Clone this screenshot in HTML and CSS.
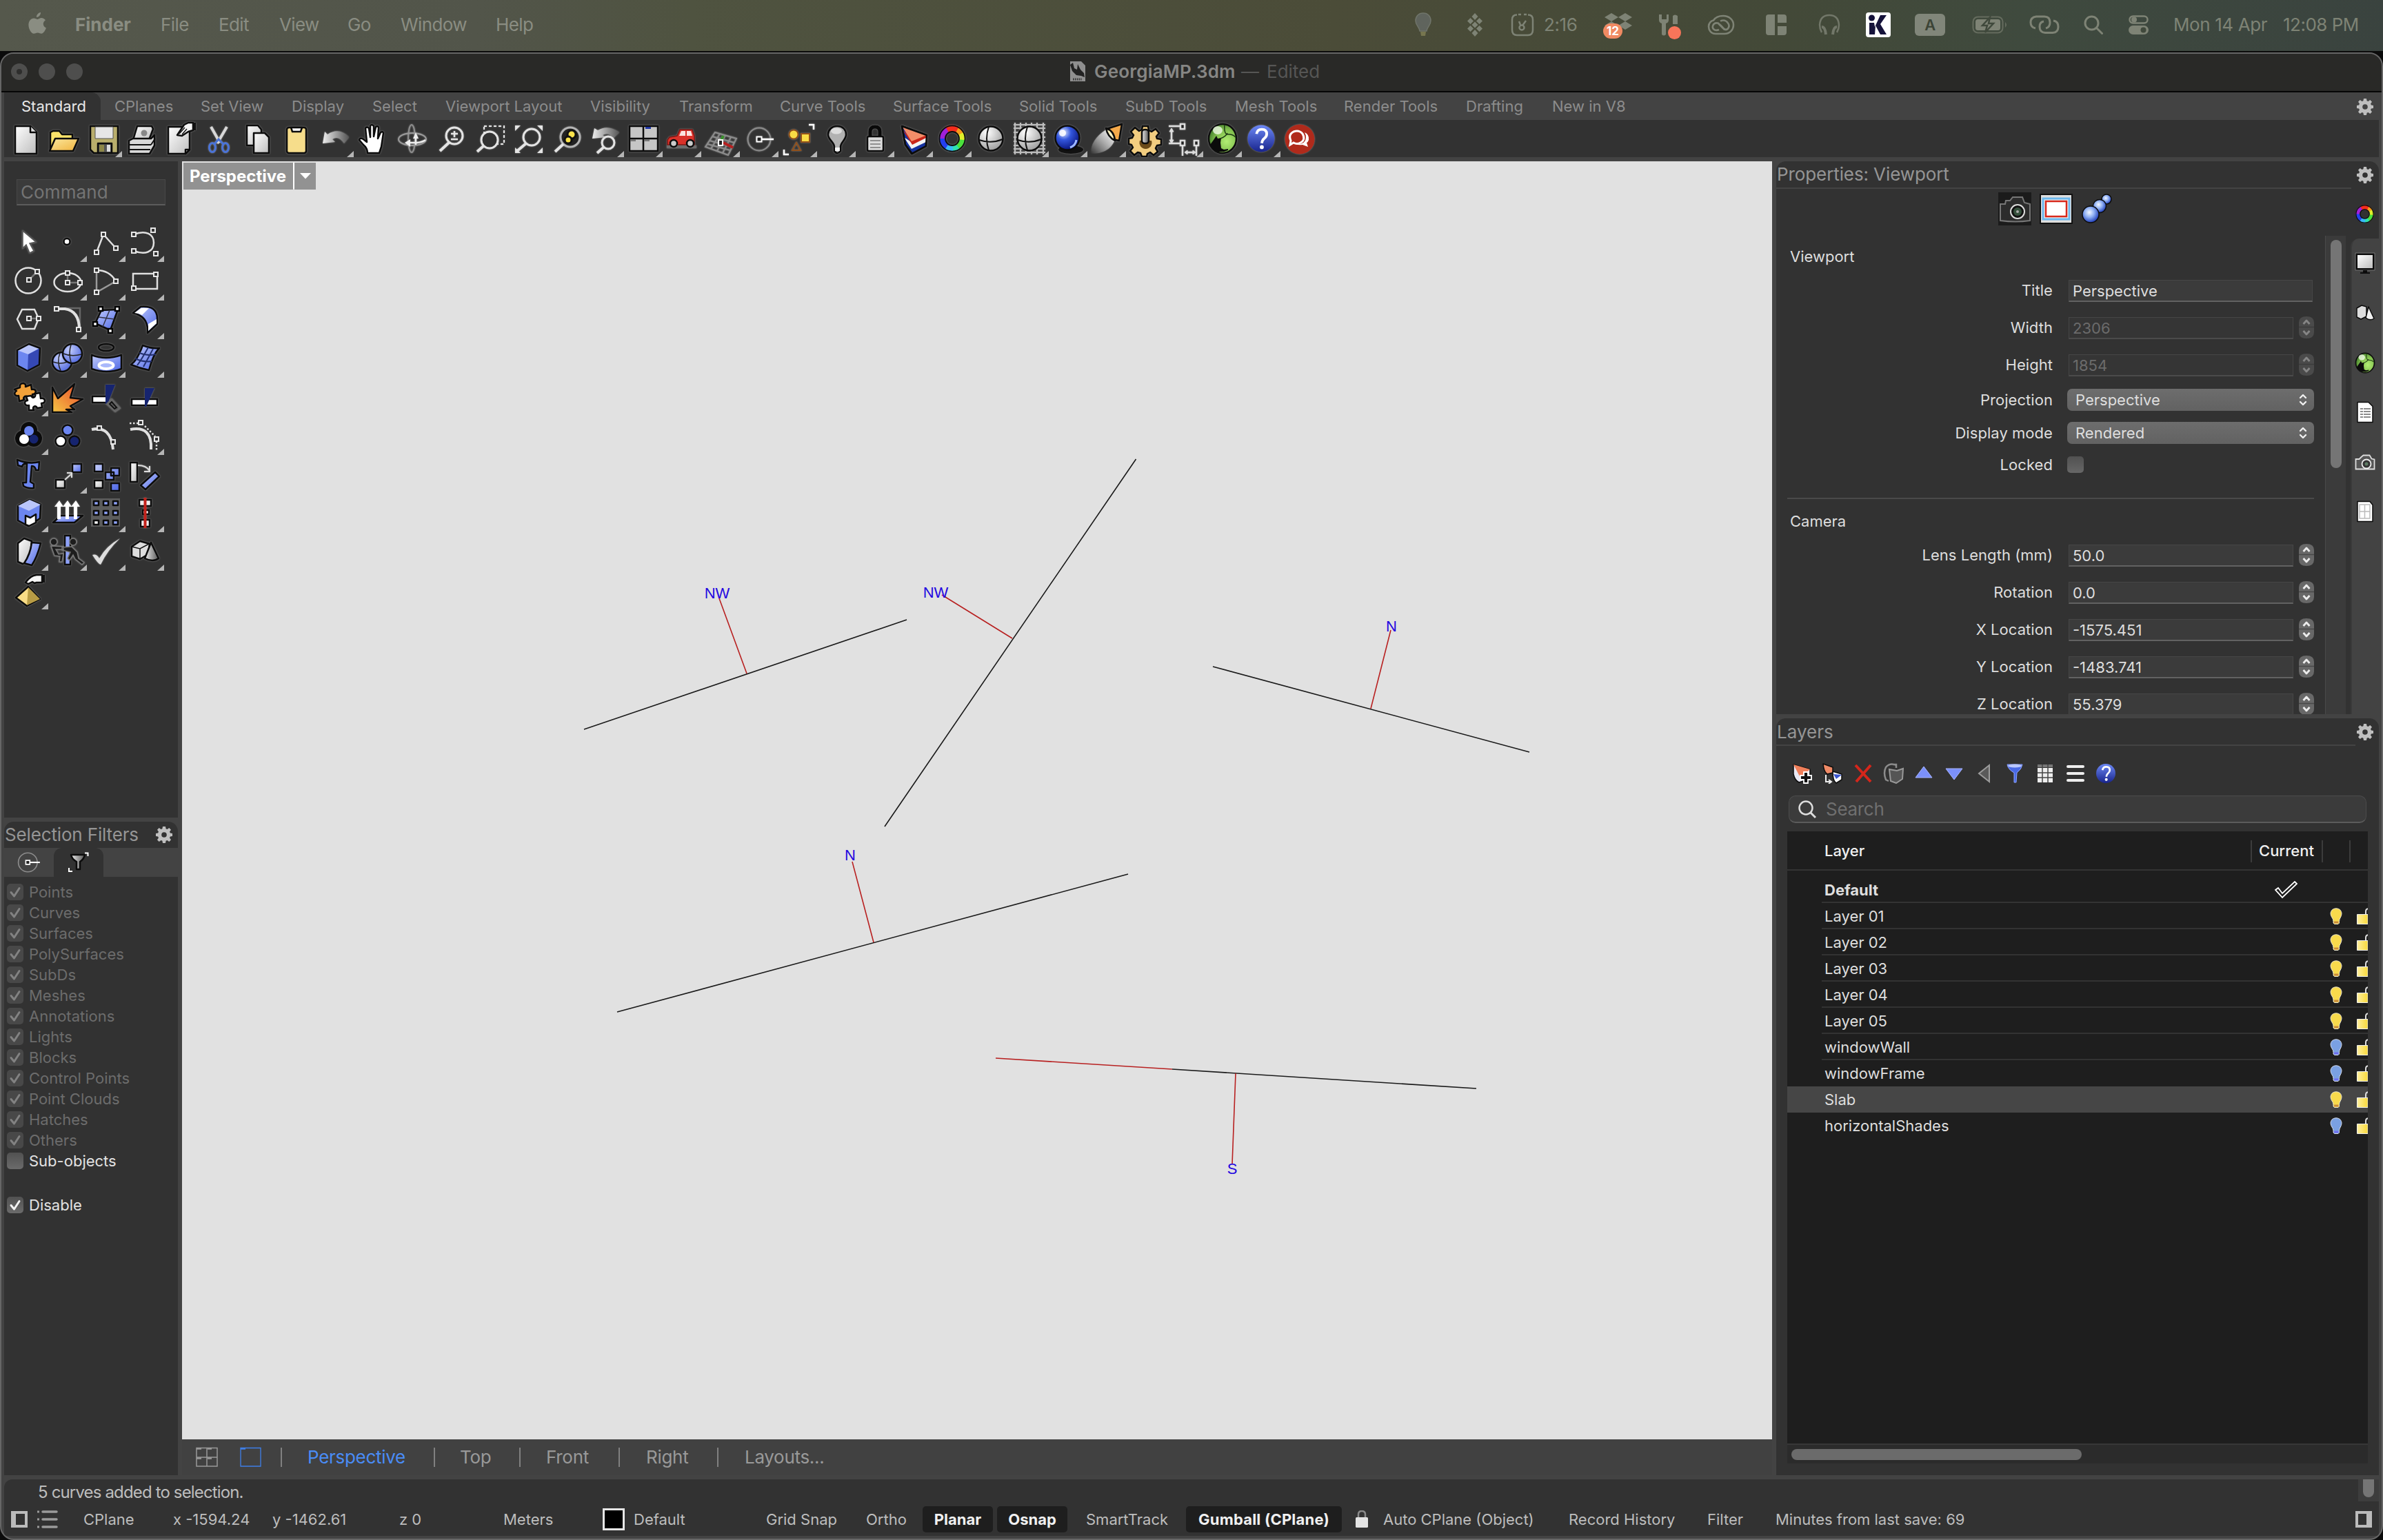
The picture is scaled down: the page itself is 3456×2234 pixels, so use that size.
FILE: index.html
```html
<!DOCTYPE html>
<html lang="en">
<head>
<meta charset="utf-8">
<title>GeorgiaMP.3dm</title>
<link rel="stylesheet" href="styles.css">
</head>
<body>
<svg class="defs" width="0" height="0">
<defs>
<linearGradient id="gBlue" x1="0" y1="0" x2="1" y2="1"><stop offset="0" stop-color="#c3cdfc"/><stop offset="1" stop-color="#4c66e6"/></linearGradient>
<linearGradient id="gGray" x1="0" y1="0" x2="1" y2="1"><stop offset="0" stop-color="#fff"/><stop offset="1" stop-color="#bdbdbd"/></linearGradient>
<linearGradient id="gDark" x1="0" y1="0" x2="1" y2="0"><stop offset="0" stop-color="#eee"/><stop offset="1" stop-color="#555"/></linearGradient>
<linearGradient id="gFire" x1="0" y1="1" x2="1" y2="0"><stop offset="0" stop-color="#f5c644"/><stop offset="1" stop-color="#e8432b"/></linearGradient>
<linearGradient id="gGold" x1="0" y1="0" x2="1" y2="1"><stop offset="0" stop-color="#fbe9a0"/><stop offset="1" stop-color="#f0b23c"/></linearGradient>
<linearGradient id="gHelp" x1="0" y1="0" x2="0" y2="1"><stop offset="0" stop-color="#6c88f5"/><stop offset="1" stop-color="#18248c"/></linearGradient>
<linearGradient id="gBeam" x1="1" y1="0" x2="0" y2="1"><stop offset="0" stop-color="#fff"/><stop offset="1" stop-color="#fff" stop-opacity="0"/></linearGradient>
<linearGradient id="gLock" x1="0" y1="0" x2="1" y2="0"><stop offset="0" stop-color="#fff0a0"/><stop offset="1" stop-color="#f8d93a"/></linearGradient>
<radialGradient id="gBall" cx=".35" cy=".25" r=".8"><stop offset="0" stop-color="#fff"/><stop offset="1" stop-color="#9a9a9a"/></radialGradient>
<radialGradient id="gBallB" cx=".35" cy=".28" r=".75"><stop offset="0" stop-color="#dfeaff"/><stop offset=".4" stop-color="#3457dd"/><stop offset="1" stop-color="#07127a"/></radialGradient>
<radialGradient id="gBallS" cx=".42" cy=".38" r=".65"><stop offset="0" stop-color="#f4f8ff"/><stop offset=".45" stop-color="#8fb0f4"/><stop offset="1" stop-color="#1433b4"/></radialGradient>
<radialGradient id="gBallG" cx=".65" cy=".6" r=".7"><stop offset="0" stop-color="#b2ee74"/><stop offset=".6" stop-color="#7fbd4c"/><stop offset="1" stop-color="#3f7a2a"/></radialGradient>
<radialGradient id="gBallL" cx=".35" cy=".3" r=".8"><stop offset="0" stop-color="#c5cffd"/><stop offset="1" stop-color="#4a62dc"/></radialGradient>
</defs>
<symbol id="gear" viewBox="0 0 24 24"><path fill="#bfbfbf" fill-rule="evenodd" d="M10 0h4l.6 3.3 1.900.8L19.300 2.100l2.700 2.700-2 2.700.9 2 3.100.5v4l-3.100.6-.9 1.900 2 2.700-2.700 2.700-2.800-1.900-1.900.8L14 24h-4l-.6-3.200-1.900-.8-2.800 1.900L2 19.200l2-2.700-.9-1.900L0 14v-4l3.100-.5.9-2-2-2.700L4.700 2.100l2.800 2 1.900-.8zM12 8.200a3.800 3.800 0 100 7.600 3.800 3.800 0 000-7.600z"/></symbol>
<symbol id="node" viewBox="0 0 8 8"><path d="M1 1h6v6H1z" fill="#323232" stroke="#e6e6e6" stroke-width="2"/></symbol>
<symbol id="wheel" viewBox="0 0 44 44"><g fill="none" stroke-width="10"><path stroke="#f52c1c" d="M13 8.400A16 16 0 0131 8.400"/><path stroke="#f79a1c" d="M30 8A16 16 0 0136.500 15"/><path stroke="#dff02a" d="M36 14A16 16 0 0137.500 26"/><path stroke="#4be03c" d="M38 24A16 16 0 0130 36"/><path stroke="#2fe0b0" d="M31 35A16 16 0 0121 38"/><path stroke="#39b9f5" d="M23 38A16 16 0 0112 34.500"/><path stroke="#2440f0" d="M13 35.500A16 16 0 016 20"/><path stroke="#a020d8" d="M6 22A16 16 0 0114 8"/></g><g fill="none" stroke="#0c0c0c" stroke-width="2"><circle cx="22" cy="22" r="20.500"/><circle cx="22" cy="22" r="11"/></g></symbol>
<symbol id="help" viewBox="0 0 44 44"><circle cx="22" cy="22" r="20.500" fill="url(#gHelp)"/><path d="M15 15q1-7 8-7 7.500 0 7.500 7 0 4-4 7-3 2.500-3.500 7" fill="none" stroke="#fff" stroke-width="4"/><circle cx="23" cy="35" r="3" fill="#fff"/></symbol>
<symbol id="rhino" viewBox="0 0 44 46"><ellipse cx="22" cy="23" rx="20" ry="21" fill="url(#gBallG)" stroke="#0d0d0d" stroke-width="2.500"/><path d="M4 32l5-7 4-6 2 4 5-1-1 7 1 8 4 2 6-1v2l-6 2h-9Q7 39 4 32z" fill="#0b0b0b"/><path d="M25 3q-1 11 3 14 8-1 13 4M19 23q8-3 10-8" fill="none" stroke="#1c3a14" stroke-width="1.500"/><ellipse cx="15" cy="11" rx="7" ry="6" fill="#f0fbe6" opacity=".8"/></symbol>
<symbol id="check" viewBox="0 0 24 24"><path d="M6 12.500l4.500 5.500L18 6.500" fill="none" stroke="currentColor" stroke-width="3" stroke-linecap="round" stroke-linejoin="round"/></symbol>
<symbol id="bulbY" viewBox="0 0 18 24"><path d="M9 .8c5 0 8 3.500 8 7.700 0 4.500-3.500 6.500-3.500 11V22l-1.500 1.500H6.500L5 22v-2.500C5 15 1 13 1 8.500 1 4.300 4 .8 9 .8z" fill="#f8da4c" stroke="#e8e4d0" stroke-width="1"/><path d="M6 19.500h6.500v3H6z" fill="#c88a3a"/></symbol>
<symbol id="bulbB" viewBox="0 0 18 24"><path d="M9 .8c5 0 8 3.500 8 7.700 0 4.500-3.500 6.500-3.500 11V22l-1.500 1.500H6.500L5 22v-2.500C5 15 1 13 1 8.500 1 4.300 4 .8 9 .8z" fill="#7aa0e2" stroke="#d5dcea" stroke-width="1"/><path d="M6 19.500h6.500v3H6z" fill="#6f6ff0"/></symbol>
<symbol id="unlock" viewBox="0 0 16 24"><path d="M13 10V5q0-4 5-4" fill="none" stroke="#ddd" stroke-width="2"/><path d="M.5 9.500H16v14H.5z" fill="url(#gLock)" stroke="#eee" stroke-width="1"/></symbol>
<symbol id="steps" viewBox="0 0 22 32"><path d="M11 0q11 0 11 9v14q0 9-11 9T0 23V9q0-9 11-9z" fill="#686868"/><path d="M0 15.500h22" stroke="#484848" stroke-width="1.500"/><path d="M6.500 11L11 6l4.500 5M6.500 21L11 26l4.500-5" fill="none" stroke="#ececec" stroke-width="2.800" stroke-linejoin="round"/></symbol>
<symbol id="updown" viewBox="0 0 12 18"><path d="M2 6l4-4 4 4M2 12l4 4 4-4" fill="none" stroke="#f0f0f0" stroke-width="2.400" stroke-linecap="round" stroke-linejoin="round"/></symbol>
<symbol id="cplane" viewBox="0 0 40 36"><circle cx="18" cy="18" r="16.500" fill="none" stroke="#8c8c8c" stroke-width="2"/><path d="M18 18h21" stroke="#fff" stroke-width="2.500"/><path d="M14.500 14.500h7v7h-7z" fill="#222" stroke="#fff" stroke-width="2"/></symbol>
</svg>

<header class="menubar">
  <nav class="apps">
    <svg width="28" height="34" viewBox="0 0 28 34"><path fill="currentColor" d="M19 1c.3 3.600-2.700 7-6 7C12.600 4.600 15.600 1.500 19 1zM20 9c2.500 0 4.700 1.400 6 3.300-4.800 2.900-4 9.300.9 11.200-1 3-3.600 8-6.800 8.300-2.200 0-2.900-1.300-5.500-1.300s-3.400 1.300-5.500 1.300C5.300 32 1.400 24.800 1.400 19c0-5.800 3.600-9.600 7.600-9.600 2.300 0 4.200 1.500 5.600 1.500C15.900 10.900 17.900 9 20 9z"/></svg>
    <b>Finder</b><span>File</span><span>Edit</span><span>View</span><span>Go</span><span>Window</span><span>Help</span>
  </nav>
  <div class="tray">
    <svg width="26" height="36" viewBox="0 0 26 36" opacity=".65"><path d="M13 1c7 0 11 5 11 11 0 7-5 8-6 15H8C7 20 2 19 2 12 2 6 6 1 13 1z" fill="#6c7272" stroke="#858b85" stroke-width="1.500"/><path d="M9 28h8l-1 6h-6z" fill="#8f8d5c"/></svg>
    <svg width="24" height="34" viewBox="0 0 24 34" fill="currentColor"><path d="M12 0l4.500 5-4.500 5-4.500-5zM5.500 7l4.500 4.500L5.500 16 1 11.500zM18.500 7l4.500 4.500-4.500 4.500-4.500-4.500zM12 12.500l4.500 4.500-4.500 4.500L7.500 17zM5.500 18l4.500 4.500L5.500 27 1 22.500zM18.500 18l4.500 4.500-4.500 4.500-4.500-4.500zM12 24l4.500 5-4.500 5-4.500-5z"/></svg>
    <svg width="34" height="34" viewBox="0 0 34 34" fill="none" stroke="currentColor" stroke-width="2.500"><path d="M9 2.500q-7 0-7 7v15q0 7.500 7 7.500h16q7 0 7-7.500v-15q0-7-7-7M11 2h4M19 2h4"/><circle cx="16" cy="21" r="3.500"/><path d="M17 18l5-7M12 12l2 5"/></svg>
    <span>2:16</span>
    <div class="stack"><svg width="40" height="34" viewBox="0 0 40 34" fill="currentColor"><path d="M10 0l10 6-10 6L0 6zM30 0l10 6-10 6-10-6zM10 12l10 6-10 6-10-6zM30 12l10 6-10 6-10-6z"/></svg><i class="count">12</i></div>
    <div class="stack"><svg width="32" height="32" viewBox="0 0 32 32" fill="currentColor"><path d="M1 1v8q0 4 4 5v16q3 3 6 0V14q4-1 4-5V1h-3v7H5V1zM21 3q3-3 7 0v12h-7z"/></svg><i class="dot"></i></div>
    <svg width="40" height="32" viewBox="0 0 40 30" fill="none" stroke="currentColor" stroke-width="2.600"><path d="M12 28C5 28 2 22 2 17.500 2 12 6 9 9 8.500 12 4 17 2 23 2c9 0 15 6 15 13s-5 13-13 13z"/><path d="M17 22q-3 1.500-6 .5-4-2-3-6 2-5 7-4 3 1 9 8 3 3 6 0 3-4 0-8-4-6-11-3M25 22L15 12"/></svg>
    <svg width="30" height="30" viewBox="0 0 30 30" fill="currentColor"><path d="M4 0h9v30H4q-4 0-4-4V4q0-4 4-4zM17 0h9q4 0 4 4v8H17zM17 17h13v9q0 4-4 4h-9z"/></svg>
    <svg width="32" height="32" viewBox="0 0 32 32" fill="none" stroke="currentColor" stroke-width="2.500" opacity=".8"><path d="M5 27Q2 22 2 16 3 2 16 2t14 14q0 6-3 11"/><path d="M5 19q5 0 6 11M27 19q-5 0-6 11" stroke-width="4"/></svg>
    <svg width="36" height="36" viewBox="0 0 36 36"><rect width="36" height="36" rx="4" fill="#fff"/><path d="M5 15h7l1 6L21 4h9l-9 13 9 15h-9l-7-13-1 13H5z" fill="#15123a"/><circle cx="8.500" cy="8" r="4.500" fill="#15123a"/></svg>
    <i class="input">A</i>
    <svg width="52" height="26" viewBox="0 0 52 26"><rect x="1.500" y="1.500" width="43" height="23" rx="7" fill="none" stroke="currentColor" stroke-width="2" opacity=".6"/><rect x="5" y="5" width="36" height="16" rx="3.500" fill="currentColor"/><path d="M48 9q4 4 0 8z" fill="currentColor" opacity=".6"/><path d="M26 2L15 14h7l-3 10 12-13h-7z" fill="currentColor" stroke="#40493c" stroke-width="2.500"/></svg>
    <svg width="44" height="28" viewBox="0 0 44 28" fill="none" stroke="currentColor" stroke-width="3"><path d="M9 19q-7-1-7-8.500T10 2h12q8 0 8 8.500 0 7-6 8.500"/><path d="M35 8q7 1 7 9t-8 8.500H23q-8-.5-8-9Q15 10 21 9"/></svg>
    <svg width="28" height="28" viewBox="0 0 28 28" fill="none" stroke="currentColor" stroke-width="3"><circle cx="11.500" cy="11.500" r="9.500"/><path d="M18.500 18.500l8 8" stroke-linecap="round"/></svg>
    <svg width="30" height="28" viewBox="0 0 30 28"><rect x="1.500" y="1.500" width="26" height="10" rx="5" fill="none" stroke="currentColor" stroke-width="2.500"/><circle cx="8" cy="6.500" r="4" fill="currentColor"/><rect y="15" width="29" height="13" rx="6.500" fill="currentColor"/><circle cx="21.500" cy="21.500" r="4" fill="#40493c"/></svg>
    <span>Mon 14 Apr</span><span>12:08 PM</span>
  </div>
</header>

<div class="window">
  <div class="titlebar">
    <div class="lights"><i class="edited"></i><i></i><i></i></div>
    <svg width="24" height="30" viewBox="0 0 24 30"><path d="M1 0h16l6 6v23H1z" fill="#8f8f8f"/><path d="M1 5l4-3 2 8 4 2 1-8 4 8 5 5 1 6-5-2-7-1-6-6z" fill="#222"/><path d="M5 26h13" stroke="#444" stroke-width="3" stroke-dasharray="2 1"/></svg>
    <b>GeorgiaMP.3dm</b><span>—</span><span>Edited</span>
  </div>

  <div class="tabs">
    <span class="on">Standard</span><span>CPlanes</span><span>Set View</span><span>Display</span><span>Select</span><span>Viewport Layout</span><span>Visibility</span><span>Transform</span><span>Curve Tools</span><span>Surface Tools</span><span>Solid Tools</span><span>SubD Tools</span><span>Mesh Tools</span><span>Render Tools</span><span>Drafting</span><span>New in V8</span>
    <svg class="gear" width="24" height="24"><use href="#gear"/></svg>
  </div>

  <div class="toolbar">
    <div class="tool"><svg viewBox="0 0 56 54"><path d="M13 9h22l9 9v31H13z" fill="url(#gGray)" class="ol"/><path d="M35 9v9h9" fill="#ddd" class="ol"/></svg></div>
    <div class="tool"><svg viewBox="0 0 56 54"><path d="M8 44V18l4-2h9l4 5h15v6" fill="#fbe36a" class="ol"/><path d="M7 45l8-18h34l-8 18z" fill="url(#gGold)" class="ol"/></svg></div>
    <div class="tool more"><svg viewBox="0 0 56 54"><path d="M10 9h40v39H15l-5-5z" fill="#b9ae6c" class="ol"/><path d="M17 10h26v17H17z" fill="#e6e6e6" stroke="#555"/><path d="M21 34h20v14H21z" fill="#555" class="ol"/><path d="M23 36h7v10h-7z" fill="#8d8748"/><path d="M34 36h5v10h-5z" fill="#ddd"/></svg></div>
    <div class="tool"><svg viewBox="0 0 56 54"><path d="M16 29L22 9h21l2 4-6 16z" fill="url(#gGray)" class="ol"/><circle cx="32" cy="19" r="4.500" fill="#888"/><path d="M10 30l6-3h26l5-5v15l-7 12H10z" fill="#d9d9d9" class="ol"/><path d="M10 36h32M10 43h31M42 36l6-9" stroke="#111" stroke-width="2"/></svg></div>
    <div class="tool"><svg viewBox="0 0 56 54"><path d="M11 10h31v33l-6 6H11z" fill="url(#gGray)" class="ol"/><path d="M36 49v-6h6z" fill="#fff" class="ol"/><path d="M24 22l10-15 6-3h7v11l-7 2-9 6z" fill="#f5f5f5" class="ol"/><path d="M47 4h4v11h-4z" fill="#111"/><path d="M27 20l8-9M31 21l7-8" stroke="#111" stroke-width="1.500"/></svg></div>
    <div class="tool"><svg viewBox="0 0 56 54"><path d="M17 10l13 23M40 10L26 34" stroke="#d8d8d8" stroke-width="4" fill="none"/><ellipse cx="19" cy="40" rx="4.500" ry="6.500" fill="none" stroke="#4a73d8" stroke-width="3"/><ellipse cx="38" cy="40" rx="4.500" ry="6.500" fill="none" stroke="#4a73d8" stroke-width="3"/><path d="M22 35l6-7 7 7" fill="none" stroke="#4a73d8" stroke-width="3"/></svg></div>
    <div class="tool"><svg viewBox="0 0 56 54"><path d="M13 8h16l5 6v23H13z" fill="url(#gGray)" class="ol"/><path d="M23 19h16l6 6v23H23z" fill="url(#gGray)" class="ol"/></svg></div>
    <div class="tool"><svg viewBox="0 0 56 54"><rect x="15" y="11" width="28" height="37" rx="3" fill="#f6dd8b" class="ol"/><path d="M21 11h16l-2 6H23z" fill="#fff" class="ol"/></svg></div>
    <div class="tool more"><svg viewBox="0 0 56 54"><path d="M11 34l3-17 4 4q17-11 31 4l-7 9q-8-12-17-6l4 4z" fill="url(#gDark)"/></svg></div>
    <div class="tool"><svg viewBox="0 0 56 54"><path d="M20 48q0-7-6-12l-6-7q1-4 6-1l5 4-2-20q2-3 5 0l2 13V9q2-4 5 0v15l3-14q3-2 4 1l-1 16 4-9q3-2 4 1l-3 20-3 9z" fill="#fff" class="ol"/></svg></div>
    <div class="tool"><svg viewBox="0 0 56 54" fill="none" stroke-width="2"><ellipse cx="28" cy="27" rx="5" ry="20" stroke="#8e8e8e"/><ellipse cx="29" cy="28" rx="20" ry="9" stroke="#9a9a9a"/><path d="M24 33h12q8-1 12-4M34 36V24" stroke="#eee" stroke-width="2.500"/><path d="M26 28l-8 5 8 6zM30 27l4-9 4 9z" fill="#eee"/></svg></div>
    <div class="tool"><svg viewBox="0 0 56 54" fill="none" stroke="#e4e4e4" stroke-width="3"><circle cx="34" cy="23" r="12"/><path d="M26 33L13 45" stroke-width="4"/><path d="M34 16v9M29 20h10M29 28h10" stroke-width="2.500"/></svg></div>
    <div class="tool"><svg viewBox="0 0 56 54" fill="none" stroke="#e4e4e4" stroke-width="3"><path d="M21 9h29v26H21z" stroke-dasharray="4 3" stroke-width="2"/><circle cx="29" cy="29" r="12" fill="#323232"/><path d="M20 38l-9 8" stroke-width="4"/></svg></div>
    <div class="tool"><svg viewBox="0 0 56 54" fill="none" stroke="#e4e4e4" stroke-width="3"><circle cx="34" cy="25" r="12"/><path d="M26 34L13 45" stroke-width="4"/><path d="M10 8h8l-8 8zM50 8h-8l8 8zM10 48v-8l8 8zM50 48v-8l-8 8z" fill="#e4e4e4" stroke="none"/></svg></div>
    <div class="tool"><svg viewBox="0 0 56 54" fill="none" stroke="#e4e4e4" stroke-width="3"><circle cx="34" cy="25" r="14" stroke="#b5b5b5" fill="#222"/><path d="M24 35L12 46" stroke-width="4"/><circle cx="36" cy="21" r="6" fill="#fae24c" stroke="#111"/><circle cx="31" cy="29" r="5" fill="#fae24c" stroke="#111"/></svg></div>
    <div class="tool more"><svg viewBox="0 0 56 54" fill="none" stroke="#e4e4e4" stroke-width="3"><path d="M10 27l3-15 5 3q15-9 31 3l-8 8q-8-9-16-4l5 3z" fill="url(#gDark)" stroke="none"/><circle cx="33" cy="33" r="9"/><path d="M26 40l-9 8" stroke-width="4"/></svg></div>
    <div class="tool more"><svg viewBox="0 0 56 54"><path d="M8 9h41v36H8z" fill="#c6c6c6" class="ol"/><path d="M28 9v36M8 27h41" class="ol"/><path d="M31 10h8v3h-8z" fill="#2037a5"/><path d="M9 28h8v3H9zM29 28h8v3h-8z" fill="#777"/></svg></div>
    <div class="tool more"><svg viewBox="0 0 56 54"><path d="M6 39h43" stroke="#6d6d6d" stroke-width="4"/><path d="M7 36v-7l3-4 11-2 4-9h18l3 9v13H7z" fill="#d9322a" stroke="#7a1714" stroke-width="1.500"/><path d="M24 23l3-7h6v7zM35 16h6l2 7h-8z" fill="#fbe3df"/><circle cx="16" cy="34" r="5" fill="#ccc" class="ol"/><circle cx="40" cy="34" r="5" fill="#ccc" class="ol"/></svg></div>
    <div class="tool more"><svg viewBox="0 0 56 54" fill="none" stroke="#8c8c8c" stroke-width="2"><path d="M20 18l31 9-12 24L6 39zM12 30l33 9M16 24l32 9M9 35l33 9M27 20L14 42M35 22L23 45M43 25L31 48"/><path d="M32 23l-4 9" stroke="#39902c" stroke-width="4"/><path d="M32 33l14 7" stroke="#b51f1f" stroke-width="4"/><path d="M25 29h6v8h-6z" fill="#222" stroke="#fff"/></svg></div>
    <div class="tool more"><svg viewBox="0 0 56 54"><use href="#cplane" x="10" y="10" width="40" height="36"/></svg></div>
    <div class="tool more"><svg viewBox="0 0 56 54"><path d="M44 7h7v7M8 43v7h7" stroke="#fff" stroke-width="2.500" fill="none"/><circle cx="22" cy="21" r="6.500" fill="#f9dc45" stroke="#90501a" stroke-width="2"/><path d="M33 20h12v12H33z" fill="#f9dc45" stroke="#90501a" stroke-width="2"/><path d="M26 33l6 11H20z" fill="none" stroke="#90501a" stroke-width="2"/></svg></div>
    <div class="tool more"><svg viewBox="0 0 56 54"><path d="M29 9c9 0 13 6 13 12 0 8-8 11-8 18v6q-5 6-9 0v-6c0-7-9-10-9-18C16 15 21 9 29 9z" fill="#b2b2b2" class="ol"/><ellipse cx="28" cy="16" rx="8" ry="4.500" fill="#ddd"/><path d="M26 40h7v5h-7z" fill="#f5f5f5"/></svg></div>
    <div class="tool more"><svg viewBox="0 0 56 54"><path d="M21 25v-8q0-7 7-7t7 7v8" fill="none" stroke="#0a0a0a" stroke-width="5"/><rect x="17" y="24" width="23" height="21" rx="2" fill="#dcdcdc" class="ol"/><path d="M21 30h15M21 35h15M21 40h15" stroke="#909090" stroke-width="2"/></svg></div>
    <div class="tool more"><svg viewBox="0 0 56 54"><path d="M11 9l35 13 0 16-21 11-9-13z" fill="#16329e" class="ol"/><path d="M14 25l11 17 21-10v-8l-20 9z" fill="#f4f4f4"/><path d="M12 14l14 22 20-10v-5l-19 8z" fill="#c92519"/><path d="M11 9l36 13-22 9z" fill="#f38d68"/><path d="M11 9l36 13-1 16-20 11-10-13z" fill="none" class="ol"/></svg></div>
    <div class="tool more"><svg viewBox="0 0 56 54"><use href="#wheel" x="8" y="7" width="40" height="40"/></svg></div>
    <div class="tool"><svg viewBox="0 0 56 54"><circle cx="28" cy="27" r="17.500" fill="url(#gBall)" class="ol"/><path d="M25 10q-6 17 0 34M11 29q17 6 34-1" fill="none" stroke="#111" stroke-width="2"/></svg></div>
    <div class="tool more"><svg viewBox="0 0 56 54"><path d="M5 7h46M5 12h46M5 37h46M5 42h46M5 47h46M7 4v46M15 4v46M23 4v46M31 4v46M39 4v46M48 4v46M5 18h46M5 25h46M5 31h46" stroke="#bdbdbd" stroke-width="2"/><circle cx="28" cy="27" r="17.500" fill="url(#gBall)" class="ol"/><path d="M25 10q-6 17 0 34M11 29q17 6 34-1" fill="none" stroke="#111" stroke-width="2"/></svg></div>
    <div class="tool more"><svg viewBox="0 0 56 54"><ellipse cx="32" cy="43" rx="18" ry="6" fill="#111"/><circle cx="27" cy="26" r="17.500" fill="url(#gBallB)" class="ol"/><ellipse cx="20" cy="19" rx="5" ry="5" fill="#fff" opacity=".85"/><path d="M31 40q8-3 9-11" fill="none" stroke="#9fb8ff" stroke-width="3"/></svg></div>
    <div class="tool more"><svg viewBox="0 0 56 54"><path d="M27 14l12 17q-8 18-34 18-1-20 22-35z" fill="url(#gBeam)" opacity=".95"/><path d="M28 13L50 6l-4 24-9-2z" fill="#f5a94a" class="ol"/><path d="M27 12q12 4 13 18-11-6-13-18z" fill="#fdf2c0" class="ol"/></svg></div>
    <div class="tool more"><svg viewBox="0 0 56 54"><path d="M24 9h8l1 6 4 2 6-4 5 6-4 5 1 3 6 1v8l-6 1-2 4 3 5-6 5-5-4-4 2-1 4h-7l-2-5-4-1-5 4-6-6 4-5-2-4-4-1v-8l5-1 2-4-4-5 6-6 6 5 4-2z" fill="#f2cd80" class="ol"/><path d="M20 30a9 9 0 1017 0" fill="#6b4a18"/><rect x="23" y="14" width="10" height="20" rx="4" fill="url(#gDark)" class="ol"/></svg></div>
    <div class="tool more"><svg viewBox="0 0 56 54" fill="none" stroke="#ddd" stroke-width="2.500"><path d="M6 9h17M6 34h17M26 36v16M46 36v16M10 15v16M31 47h11"/><path d="M7 17l3-5 3 5zM7 29l3 5 3-5zM33 44l-4 3 4 3zM41 44l4 3-4 3z" fill="#ddd" stroke-width="1"/><path d="M23 6h6v7h-6zM23 30h6v7h-6zM43 30h6v7h-6z" fill="#222"/></svg></div>
    <div class="tool more"><svg viewBox="0 0 56 54"><use href="#rhino" x="6" y="4" width="44" height="46"/></svg></div>
    <div class="tool more"><svg viewBox="0 0 56 54"><use href="#help" x="7" y="6" width="42" height="42"/></svg></div>
    <div class="tool"><svg viewBox="0 0 56 54"><circle cx="28" cy="28" r="21.500" fill="#b02a1b"/><path d="M19 33l-5 3 1-6q-4-9 4-13 8-3 13 3 5 9-3 13-5 3-10 0z" fill="none" stroke="#fff" stroke-width="3"/><path d="M35 18q7 3 6 11-1 3-3 4l2 6-8-3q-6 1-9-1 13 1 14-9 0-5-2-8z" fill="#fff"/></svg></div>
  </div>

  <main class="main">
    <aside class="left">
      <section class="palette">
        <div class="command">Command</div>
        <div class="grid">
          <div class="tool"><svg viewBox="0 0 56 56"><path d="M19 11l19 16-9 2 6 11-6 3-5-12-5 5z" fill="#fff" stroke="#555" stroke-width="1.500"/></svg></div>
          <div class="tool more"><svg viewBox="0 0 56 56"><circle cx="27" cy="26.500" r="4.500" fill="#fff" class="ol"/></svg></div>
          <div class="tool more"><svg viewBox="0 0 56 56" class="ln"><path d="M14 42L24 16l18 20"/><use href="#node" x="10" y="38" width="8" height="8"/><use href="#node" x="20" y="12" width="8" height="8"/><use href="#node" x="38" y="32" width="8" height="8"/></svg></div>
          <div class="tool more"><svg viewBox="0 0 56 56" class="ln"><path d="M12 16C30 9 41 16 41 28 41 42 28 46 12 40"/><use href="#node" x="8" y="12" width="8" height="8"/><use href="#node" x="36" y="6" width="8" height="8"/><use href="#node" x="40" y="40" width="8" height="8"/><use href="#node" x="8" y="36" width="8" height="8"/></svg></div>

          <div class="tool more"><svg viewBox="0 0 56 56" class="ln"><circle cx="27" cy="27" r="18.500"/><path d="M28 26l12-12" stroke="#777"/><use href="#node" x="24" y="22" width="8" height="8"/><use href="#node" x="36" y="10" width="8" height="8"/></svg></div>
          <div class="tool more"><svg viewBox="0 0 56 56" class="ln"><ellipse cx="28" cy="29.500" rx="19.500" ry="13.500"/><path d="M28 16v14h18" stroke="#777"/><use href="#node" x="24" y="12" width="8" height="8"/><use href="#node" x="24" y="26" width="8" height="8"/><use href="#node" x="42" y="26" width="8" height="8"/></svg></div>
          <div class="tool more"><svg viewBox="0 0 56 56" class="ln"><path d="M42 28L14 44V12" stroke="#999"/><path d="M14 12q19 0 28 16"/><use href="#node" x="10" y="8" width="8" height="8"/><use href="#node" x="38" y="24" width="8" height="8"/><use href="#node" x="10" y="40" width="8" height="8"/></svg></div>
          <div class="tool more"><svg viewBox="0 0 56 56" class="ln"><path d="M11 17h35v22H11z"/><use href="#node" x="40" y="14" width="8" height="8"/><use href="#node" x="8" y="34" width="8" height="8"/></svg></div>

          <div class="tool more"><svg viewBox="0 0 56 56" class="ln"><path d="M11 27l7-14h18l6 13-6 15H18z"/><path d="M28 26h12" stroke="#777"/><use href="#node" x="24" y="22" width="8" height="8"/><use href="#node" x="38" y="22" width="8" height="8"/></svg></div>
          <div class="tool more"><svg viewBox="0 0 56 56" class="ln"><path d="M24 11h22v28" stroke="#666"/><path d="M14 12h10q21 3 21 30" stroke-width="4"/><use href="#node" x="8" y="8" width="8" height="8"/><use href="#node" x="40" y="38" width="8" height="8"/></svg></div>
          <div class="tool more"><svg viewBox="0 0 56 56"><path d="M21 14l24-1-11 30-22-10z" fill="url(#gBlue)" class="ol"/><path d="M33 14L23 38M17 24l23 3" stroke="#334" stroke-width="1.500"/><path class="pin" d="M17 9h6v6h-6zM41 9h6v6h-6zM31 41h6v6h-6zM9 31h6v6H9z"/></svg></div>
          <div class="tool more"><svg viewBox="0 0 56 56"><path d="M11 18l11-9q24-2 24 17v8L32 47q2-24-21-29z" fill="url(#gBlue)" class="ol"/><path d="M13 18l10-7 11 0-10 10q-5-3-11-3zM33 34l12-7v6l-12 11z" fill="#fff"/></svg></div>

          <div class="tool more"><svg viewBox="0 0 56 56"><path d="M11 16L28 7l16 6-2 24-17 9-14-8z" fill="#6c86f0"/><path d="M11 16L28 7l16 6-17 9z" fill="#bac6fb"/><path d="M44 13L27 22l-1 24 17-9z" fill="#3548b4"/><path d="M11 16L28 7l16 6-1 24-17 9-15-8z" fill="none" class="ol"/></svg></div>
          <div class="tool more"><svg viewBox="0 0 56 56"><circle cx="20" cy="33" r="14" fill="url(#gBallL)" class="ol"/><path d="M17 20q-5 13 1 26M7 33q12 4 20 0" fill="none" stroke="#222" stroke-width="1.500"/><circle cx="35" cy="21" r="14" fill="url(#gBallL)" class="ol"/><path d="M33 8q-4 12 0 26M22 21q12 5 26 1" fill="none" stroke="#222" stroke-width="1.500"/></svg></div>
          <div class="tool more"><svg viewBox="0 0 56 56"><ellipse cx="28" cy="12" rx="11" ry="5" fill="none" class="ol"/><path d="M7 23q20 8 43 0v20q-21 8-43 0z" fill="url(#gBlue)" class="ol"/><ellipse cx="28" cy="38" rx="10.500" ry="5" fill="#a9b8fb" stroke="#fff" stroke-width="4"/></svg></div>
          <div class="tool more"><svg viewBox="0 0 56 56"><path d="M8 37q9-6 17-28 12 5 24 4-9 9-15 32-14-3-26-8z" fill="url(#gBlue)" class="ol"/><path d="M14 28q12 6 24 4M20 20q12 5 24 2M17 38q6-8 16-26M26 40q5-9 14-26" stroke="#23306f" stroke-width="2" fill="none"/></svg></div>

          <div class="tool more"><svg viewBox="0 0 56 56"><path d="M7 17l8-3q-1-6 5-6 4 1 3 5l8-3 1 7q5-1 6 3-1 4-5 4l1 5-7 1q-1-4-5-3-3 2-1 5l-7 2-1-8q-5 1-6-3 1-3 3-4z" fill="#f3a23a" class="ol"/><path d="M24 27l7-1q2 4 5 2 2-2 1-5l7-1 1 8q5-1 6 3 0 4-5 4l1 6-7 1q-2-4-5-2-2 2 0 5l-7 0v-7q-5 1-6-3 0-4 4-4z" fill="#fff" class="ol"/></svg></div>
          <div class="tool"><svg viewBox="0 0 56 56"><path d="M6 50V14l8 16L38 9 32 29l18 2-18 10 6 5H26l8 4z" fill="url(#gFire)" class="ol"/></svg></div>
          <div class="tool"><svg viewBox="0 0 56 56"><path d="M8 27h22v9H8z" fill="#fff" class="ol"/><path d="M27 10h14L30 38h-3z" fill="#16246f"/><path d="M36 31l12 13-7 5-12-11z" fill="none" stroke="#666" stroke-width="2"/><path d="M36 35l7 8-3 2-7-7z" fill="none" stroke="#111" stroke-width="2"/></svg></div>
          <div class="tool"><svg viewBox="0 0 56 56"><path d="M9 31h37v9H9z" fill="#fff" class="ol"/><path d="M28 15h14L30 42h-2z" fill="#16246f"/></svg></div>

          <div class="tool more"><svg viewBox="0 0 56 56"><g fill="#0b0b0b"><circle cx="28" cy="20" r="12"/><circle cx="20" cy="32" r="12"/><circle cx="35" cy="32" r="12"/></g><circle cx="28" cy="21" r="7" fill="#6c86f0"/><circle cx="21" cy="33" r="7" fill="#fff"/><circle cx="35" cy="33" r="6.500" fill="#16246f"/></svg></div>
          <div class="tool"><svg viewBox="0 0 56 56"><circle cx="28" cy="20" r="7.500" fill="#6c86f0" class="ol"/><circle cx="18" cy="36" r="7.500" fill="#fff" class="ol"/><circle cx="38" cy="36" r="7.500" fill="#16246f" class="ol"/></svg></div>
          <div class="tool"><svg viewBox="0 0 56 56" class="ln"><path d="M7 19q28-6 31 29" stroke-width="4"/><use href="#node" x="14" y="13" width="8" height="8"/><use href="#node" x="34" y="33" width="8" height="8"/></svg></div>
          <div class="tool more"><svg viewBox="0 0 56 56" class="ln"><path d="M7 19q32-6 30 29" stroke-width="4"/><path d="M6 10h14M28 14l15 15M45 36v14" stroke-dasharray="2.500 2.500"/><use href="#node" x="18" y="5" width="8" height="8"/><use href="#node" x="41" y="29" width="8" height="8"/></svg></div>

          <div class="tool"><svg viewBox="0 0 56 56"><path d="M11 7q17 7 32 3l-1 12h-4q-1-6-6-6l-2 23 5 3v6q-9 1-15-3l-1-5 5 0 1-27q-6-1-7 4l-6-2z" fill="#6c86f0" class="ol"/></svg></div>
          <div class="tool more"><svg viewBox="0 0 56 56"><path d="M11 36h13v12H11z" fill="url(#gGray)" class="ol"/><path d="M35 13h13v12H35z" fill="url(#gBlue)" class="ol"/><path d="M24 36l9-8M27 26h7v7" stroke="#ddd" stroke-width="2" fill="none"/></svg></div>
          <div class="tool"><svg viewBox="0 0 56 56"><path d="M35 19h12v11H35zM11 13h12v11H11zM35 41h12v11H35zM27 25h12v11H27z" fill="url(#gBlue)" class="ol"/><path d="M11 37h12v11H11z" fill="url(#gGray)" class="ol"/></svg></div>
          <div class="tool"><svg viewBox="0 0 56 56"><path d="M7 11h10v28H7z" fill="url(#gGray)" class="ol"/><path d="M22 44l21-19 6 6-20 19z" fill="url(#gBlue)" class="ol"/><path d="M18 15q12 0 17 8M35 16v8h-8" fill="none" stroke="#ddd" stroke-width="2"/></svg></div>

          <div class="tool more"><svg viewBox="0 0 56 56"><path d="M12 18l17-9 16 7-1 20-17 11-15-8z" fill="#6c86f0" class="ol"/><path d="M12 18l17-9 16 7-17 9z" fill="#bac6fb"/><path d="M23 32l7 3 8-5v12l-10 5-5-2z" fill="#fff" class="ol"/></svg></div>
          <div class="tool more"><svg viewBox="0 0 56 56"><path d="M7 42l11-10h32L38 42z" fill="url(#gBlue)" class="ol"/><path d="M13 37V19h-4l7-9 6 9h-4v18zM25 37V19h-4l7-9 6 9h-4v18zM37 37V19h-4l7-9 6 9h-4v18z" fill="#fff"/></svg></div>
          <div class="tool more"><svg class="ln" viewBox="0 0 56 56"><path d="M6 7h42v41H6z" fill="#5c5c5c" stroke="none"/><path d="M10 11h7v6h-7zM24 11h7v6h-7zM38 11h7v6h-7zM10 25h7v6h-7zM24 25h7v6h-7zM38 25h7v6h-7zM24 39h7v6h-7zM38 39h7v6h-7z" fill="#8ea2f8" class="ol"/><path d="M10 39h7v6h-7z" fill="#fff" class="ol"/></svg></div>
          <div class="tool more"><svg viewBox="0 0 56 56"><path d="M20 9h17v9H20zM25 24h9v6h-9zM22 38h13v10H22z" fill="#eee" class="ol"/><path d="M28.500 6v44" stroke="#c3221b" stroke-width="4"/></svg></div>

          <div class="tool more"><svg viewBox="0 0 56 56"><path d="M12 16l9-7 11 4-3 28-10 5-7-3z" fill="url(#gGray)" class="ol"/><path d="M32 15l13 1q-5 20-13 32l-11-3q9-13 11-30z" fill="url(#gBlue)" class="ol"/></svg></div>
          <div class="tool more"><svg viewBox="0 0 56 56" fill="none" stroke="#777"><path d="M24 5h8v42h-8z" fill="#8ea2f8" class="ol"/><g fill="#1d1d1d" stroke-width="1.500"><circle cx="36" cy="14" r="5"/><circle cx="8" cy="14" r="5"/><path d="M20 22l14-1 8 8 2 9 8 6-3 3-10-8-3-6-5 8-3-3 4-9-12-3zM4 20l18 1v4H11l4 7 7-1-2 12-4 0 1-8-8-1z"/></g></svg></div>
          <div class="tool more"><svg viewBox="0 0 56 56"><path d="M8 33q6-2 10 5Q28 20 48 9 30 26 20 47q-4-1-12-14z" fill="#dedede"/></svg></div>
          <div class="tool more"><svg viewBox="0 0 56 56"><path d="M9 21l12-8 14 4-2 15-12 7-12-4z" fill="#ddd" class="ol"/><path d="M21 24v14M9 21l12 3 13-7" fill="none" stroke="#111" stroke-width="1.500"/><path d="M37 15l11 23q-8 6-20 0z" fill="url(#gDark)" class="ol"/></svg></div>

          <div class="tool more"><svg viewBox="0 0 56 56"><path d="M23 17q7-10 16-11h8v11h-8l-3 1-3-2-6 3z" fill="#f5f5f5" class="ol"/><path d="M46 6h5v11h-5z" fill="#111"/><path d="M27 23L9 39l16 12 19-10z" fill="#f8dc86" class="ol"/><path d="M27 24l17 17-19 9z" fill="#b89c45"/></svg></div>
        </div>
      </section>

      <section class="filters">
        <h2>Selection Filters <svg width="24" height="24"><use href="#gear"/></svg></h2>
        <div class="ftabs"><i><svg width="34" height="30"><use href="#cplane"/></svg></i><i class="on"><svg width="30" height="30" viewBox="0 0 30 30"><path d="M24 1.500h4.500V6M1 23v5h5" fill="none" stroke="#fff" stroke-width="2"/><path d="M4 4h20q-1 6-7 10v11h-5V14Q5 10 4 4z" fill="url(#gDark)" class="ol"/></svg></i></div>
        <ul>
          <li><svg class="cb"><use href="#check"/></svg>Points</li>
          <li><svg class="cb"><use href="#check"/></svg>Curves</li>
          <li><svg class="cb"><use href="#check"/></svg>Surfaces</li>
          <li><svg class="cb"><use href="#check"/></svg>PolySurfaces</li>
          <li><svg class="cb"><use href="#check"/></svg>SubDs</li>
          <li><svg class="cb"><use href="#check"/></svg>Meshes</li>
          <li><svg class="cb"><use href="#check"/></svg>Annotations</li>
          <li><svg class="cb"><use href="#check"/></svg>Lights</li>
          <li><svg class="cb"><use href="#check"/></svg>Blocks</li>
          <li><svg class="cb"><use href="#check"/></svg>Control Points</li>
          <li><svg class="cb"><use href="#check"/></svg>Point Clouds</li>
          <li><svg class="cb"><use href="#check"/></svg>Hatches</li>
          <li><svg class="cb"><use href="#check"/></svg>Others</li>
          <li class="live"><svg class="cb"></svg>Sub-objects</li>
          <li class="live last"><svg class="cb"><use href="#check"/></svg>Disable</li>
        </ul>
      </section>
    </aside>

    <section class="center">
      <div class="viewport">
        <div class="vlabel"><b>Perspective</b><i><svg width="16" height="9" viewBox="0 0 16 9"><path d="M0 0h16L8 8.500z" fill="#fff"/></svg></i></div>
        <svg class="scene" width="2306" height="1854" viewBox="264 234 2306 1854">
          <g stroke="#1a1a1a" stroke-width="1.600" fill="none"><path d="M847 1058L1315 899M1647.500 666L1283 1199M1759 967L2218 1091M895 1468L1636 1268M1700 1551L2141 1579"/></g>
          <g stroke="#b82020" stroke-width="1.600" fill="none"><path d="M1083 977L1043 868M1468 926L1366 863M1988 1028L2017 914M1267 1367L1236 1250M1792 1557L1787 1689M1444 1535L1700 1551"/></g>
          <g class="dir"><text x="1040" y="868">NW</text><text x="1357" y="867">NW</text><text x="2018" y="916">N</text><text x="1233" y="1248">N</text><text x="1787" y="1703">S</text></g>
        </svg>
      </div>
      <nav class="views">
        <svg width="32" height="30" viewBox="0 0 32 30" fill="none" stroke="#999" stroke-width="1.500"><path d="M1 1.500h30V28H1zM16 1v27M1 15h30"/><path d="M1 2.500h7M17 2.500h6M1 16.500h7M17 16.500h6" stroke-width="2.500"/></svg>
        <svg width="32" height="30" viewBox="0 0 32 30" fill="none" stroke="#3f7fe8" stroke-width="1.300"><path d="M1 1.500h29V28H1z"/><path d="M1 2.500h7" stroke-width="2.500"/></svg>
        <i></i><span class="on">Perspective</span><i></i><span>Top</span><i></i><span>Front</span><i></i><span>Right</span><i></i><span>Layouts...</span>
      </nav>
    </section>

    <aside class="right">
      <section class="props">
        <h2>Properties: Viewport</h2>
        <div class="body">
          <div class="modes">
            <svg width="48" height="48" viewBox="0 0 48 48"><path d="M0 0h48v48H0z" fill="#1b1b1b"/><path d="M3 17h7l1-5 6 0 4-5h14l3 8 8 2v24q-21 3-43 0z" fill="#2c2c2c" stroke="#777" stroke-width="2"/><circle cx="28" cy="28" r="10" fill="#111" stroke="#ddd" stroke-width="2"/><circle cx="28" cy="28" r="6" fill="#35503c"/><circle cx="28" cy="28" r="2" fill="#aaa"/></svg>
            <svg width="48" height="44" viewBox="0 0 48 44"><path d="M1 1h46v42H1z" fill="#dedede" stroke="#111" stroke-width="2"/><path d="M5 7h38v30H5z" fill="#eee" stroke="#6cb8ee" stroke-width="3"/><path d="M9 11h30v22H9z" fill="#fff" stroke="#d8291c" stroke-width="2.500"/></svg>
            <svg width="46" height="44" viewBox="0 0 46 44"><circle cx="37" cy="8" r="7" fill="url(#gBallS)" class="ol2"/><circle cx="27" cy="18" r="9.500" fill="url(#gBallS)" class="ol2"/><circle cx="14" cy="30" r="12" fill="url(#gBallS)" class="ol2"/></svg>
          </div>
          <div class="scroll">
            <div class="form">
              <h3>Viewport</h3>
              <div class="row"><label>Title</label><div class="field wide">Perspective</div></div>
              <div class="row off"><label>Width</label><div class="field">2306</div><svg class="st"><use href="#steps"/></svg></div>
              <div class="row off"><label>Height</label><div class="field">1854</div><svg class="st"><use href="#steps"/></svg></div>
              <div class="row sel"><label>Projection</label><div class="select">Perspective<svg width="12" height="18"><use href="#updown"/></svg></div></div>
              <div class="row sel"><label>Display mode</label><div class="select">Rendered<svg width="12" height="18"><use href="#updown"/></svg></div></div>
              <div class="row lock"><label>Locked</label><i class="box"></i></div>
              <hr>
              <h3>Camera</h3>
              <div class="row"><label>Lens Length (mm)</label><div class="field">50.0</div><svg class="st"><use href="#steps"/></svg></div>
              <div class="row"><label>Rotation</label><div class="field">0.0</div><svg class="st"><use href="#steps"/></svg></div>
              <div class="row"><label>X Location</label><div class="field">-1575.451</div><svg class="st"><use href="#steps"/></svg></div>
              <div class="row"><label>Y Location</label><div class="field">-1483.741</div><svg class="st"><use href="#steps"/></svg></div>
              <div class="row"><label>Z Location</label><div class="field">55.379</div><svg class="st"><use href="#steps"/></svg></div>
            </div>
            <div class="track"><i></i></div>
          </div>
        </div>
        <div class="rail">
          <svg class="g" width="24" height="24"><use href="#gear"/></svg>
          <svg class="w" width="27" height="27"><use href="#wheel"/></svg>
          <div class="side">
            <svg width="30" height="32" viewBox="0 0 30 32"><path d="M1 1h28v25H1z" fill="#0c0c0c" stroke="#777"/><path d="M4 4h22v19H4z" fill="url(#gGray)"/><path d="M12 26h6v3h4v2H8v-2h4z" fill="#0c0c0c"/></svg>
            <svg width="28" height="24" viewBox="0 0 28 24"><path d="M2 5l7-4 7 2v14l-8 4-6-3z" fill="#ddd" class="ol2"/><path d="M19 3l8 17q-6 4-12-1z" fill="#f0f0f0" class="ol2"/></svg>
            <svg width="30" height="31"><use href="#rhino"/></svg>
            <svg width="26" height="32" viewBox="0 0 26 32"><path d="M2 1.500h16l6 6v23H2z" fill="#fff" class="ol2"/><path d="M6 11h4M6 15h4M6 19h4M6 23h4M11 11h10M11 15h10M11 19h10M11 23h10" stroke="#666" stroke-width="1.500"/></svg>
            <svg width="30" height="24" viewBox="0 0 30 24"><path d="M1.500 7h5l3-3 3-2.500h9l3 5 4 1v14h-27z" fill="#555" stroke="#ddd" stroke-width="1.800"/><circle cx="17" cy="14" r="6.500" fill="#333" stroke="#eee" stroke-width="1.800"/><circle cx="17" cy="14" r="2.500" fill="#5d7a63"/></svg>
            <svg width="26" height="32" viewBox="0 0 26 32"><path d="M2 1.500h18l4 5v24H2z" fill="#fff" class="ol2"/><path d="M5 6h15v20H5zM12.500 6v20M5 16h15" fill="none" stroke="#bbb" stroke-width="1.500"/></svg>
          </div>
        </div>
      </section>

      <section class="layers">
        <h2>Layers <svg width="24" height="24"><use href="#gear"/></svg></h2>
        <div class="ltools">
          <svg viewBox="0 0 30 30"><path d="M2 2l24 7v14l-16 5q-6-3-8-12z" fill="#e8e8f4" class="ol2"/><path d="M2 2l24 7-14 12z" fill="#ef7f5a"/><path d="M17 13h6v5h5v6h-5v5h-6v-5h-5v-6h5z" fill="#111" stroke="#fff" stroke-width="1.800"/></svg>
          <svg viewBox="0 0 30 30"><path d="M1 1l14 5v8l-8 2q-5-3-6-15z" fill="#f08a66" class="ol2"/><path d="M15 12l13 4v8l-8 5q-5-3-5-17z" fill="#fff" class="ol2"/><path d="M16 16l12 1-8 6z" fill="#3a55cf"/><path d="M5 17v10h8M9 24l4 3-4 3" fill="none" stroke="#eee" stroke-width="2"/></svg>
          <svg viewBox="0 0 30 30"><path d="M4 3l22 24M26 3L5 27" stroke="#d5261b" stroke-width="4"/></svg>
          <svg viewBox="0 0 30 30"><path d="M19 3Q10-1 4 6 0 14 4 24l4 2M14 2h5v5" fill="none" stroke="#8c8c8c" stroke-width="2.500"/><path d="M9 9l11 2 9-3-1 15-9 6-8-3z" fill="#555" stroke="#999" stroke-width="2"/></svg>
          <svg viewBox="0 0 30 30"><path d="M15 5l12 16H3z" fill="#7b90fb" stroke="#a9b6ff"/></svg>
          <svg viewBox="0 0 30 30"><path d="M15 24L3 8h24z" fill="#7b90fb" stroke="#a9b6ff"/></svg>
          <svg viewBox="0 0 30 30"><path d="M22 3v24L7 15z" fill="#5a5a5a" stroke="#9c9c9c" stroke-width="2"/></svg>
          <svg viewBox="0 0 30 30"><path d="M4 2h22q-1 7-8 12l-1 14h-3V14Q5 9 4 2z" fill="#4a6ae6" stroke="#8fa6ff"/><ellipse cx="15" cy="4" rx="10" ry="2.500" fill="#b9c7ff"/></svg>
          <svg viewBox="0 0 30 30"><path d="M4 2h22v4H4z" fill="#777"/><path d="M4 7h22v21H4z" fill="#eee"/><path d="M11 2v26M19 2v26M4 14h22M4 21h22" stroke="#444" stroke-width="1.500"/></svg>
          <svg viewBox="0 0 30 30"><path d="M4 5h22M4 15h22M4 25h22" stroke="#eee" stroke-width="4" stroke-linecap="round"/></svg>
          <svg viewBox="0 0 30 30"><use href="#help" x="0" y="0" width="30" height="30"/></svg>
        </div>
        <div class="search"><svg width="26" height="28" viewBox="0 0 26 28"><circle cx="11" cy="12" r="9.500" fill="none" stroke="#ddd" stroke-width="2.500"/><path d="M18 19l7 7" stroke="#ddd" stroke-width="3"/></svg>Search</div>
        <div class="table">
          <div class="thead"><span>Layer</span><i></i><span>Current</span><i></i><i></i></div>
          <div class="lrow bold"><span>Default</span><svg class="cur" width="36" height="26" viewBox="0 0 36 26"><path d="M2 13l4-3 6 8L30 1l3 3-21 20z" fill="none" stroke="#fff" stroke-width="1.800"/></svg></div>
          <div class="lrow"><span>Layer 01</span><svg class="bb"><use href="#bulbY"/></svg><svg class="lk"><use href="#unlock"/></svg></div>
          <div class="lrow"><span>Layer 02</span><svg class="bb"><use href="#bulbY"/></svg><svg class="lk"><use href="#unlock"/></svg></div>
          <div class="lrow"><span>Layer 03</span><svg class="bb"><use href="#bulbY"/></svg><svg class="lk"><use href="#unlock"/></svg></div>
          <div class="lrow"><span>Layer 04</span><svg class="bb"><use href="#bulbY"/></svg><svg class="lk"><use href="#unlock"/></svg></div>
          <div class="lrow"><span>Layer 05</span><svg class="bb"><use href="#bulbY"/></svg><svg class="lk"><use href="#unlock"/></svg></div>
          <div class="lrow"><span>windowWall</span><svg class="bb"><use href="#bulbB"/></svg><svg class="lk"><use href="#unlock"/></svg></div>
          <div class="lrow plain"><span>windowFrame</span><svg class="bb"><use href="#bulbB"/></svg><svg class="lk"><use href="#unlock"/></svg></div>
          <div class="lrow plain picked"><span>Slab</span><svg class="bb"><use href="#bulbY"/></svg><svg class="lk"><use href="#unlock"/></svg></div>
          <div class="lrow plain"><span>horizontalShades</span><svg class="bb"><use href="#bulbB"/></svg><svg class="lk"><use href="#unlock"/></svg></div>
        </div>
        <div class="hbar"><i></i></div>
      </section>
    </aside>
  </main>

  <footer class="foot">
    <div class="msg"><span>5 curves added to selection.</span><div class="vbar"><i></i></div></div>
    <div class="status">
      <svg width="24" height="24" viewBox="0 0 24 24"><path d="M0 0h24v24H0zM7 4v16h13V4z" fill="#bbb" fill-rule="evenodd"/></svg>
      <svg width="30" height="28" viewBox="0 0 30 28"><path d="M8 3h20M8 14h20M8 25h20" stroke="#9a9a9a" stroke-width="3.500" stroke-linecap="round"/><path d="M0 3h3M0 14h3M0 25h3" stroke="#9a9a9a" stroke-width="3"/></svg>
      <span>CPlane</span><span>x -1594.24</span><span>y -1462.61</span><span>z 0</span><span>Meters</span><i class="sw"></i><span>Default</span><span>Grid Snap</span><span>Ortho</span><b>Planar</b><b>Osnap</b><span>SmartTrack</span><b>Gumball (CPlane)</b>
      <svg width="18" height="26" viewBox="0 0 18 26"><path d="M4 11V6q0-5 5-5t5 5v5" fill="none" stroke="#8a8a8a" stroke-width="2.500"/><rect y="10" width="18" height="15" rx="1.500" fill="#e4e4e4"/></svg>
      <span>Auto CPlane (Object)</span><span>Record History</span><span>Filter</span><span>Minutes from last save: 69</span>
      <svg width="24" height="24" viewBox="0 0 24 24"><path d="M0 0h24v24H0zM4 4v16h12V4z" fill="#bbb" fill-rule="evenodd"/></svg>
    </div>
  </footer>
</div>
</body>
</html>
```
FILE: styles.css
```css
* { box-sizing: border-box; }
body { margin: 0; width: 3456px; height: 2234px; overflow: hidden; background: #0b0b0b; font-family: Inter, "Liberation Sans", sans-serif; font-size: 22px; line-height: 1.2; color: #dedede; }
svg { display: block; flex: none; }
i { font-style: normal; }
span, b, label, h2, h3 { white-space: nowrap; }
h2, h3, ul { margin: 0; padding: 0; font-weight: 400; }
.defs { position: absolute; }

/* system menu bar */
.menubar { height: 74px; background: linear-gradient(90deg, #55584c 0, #52554a 20%, #4f5340 29%, #4b4c38 56%, #434938 75%, #3f4a3e 85%, #3a433f 100%); color: #8a8d82; font-size: 26px; display: grid; grid-template-columns: 2010px 1446px; }
.apps, .tray { display: grid; align-items: center; height: 71px; }
.apps { padding-left: 40px; grid-template-columns: 69px 124px 84px 88px 99px 77px 138px 100px; letter-spacing: -.6px; }
.apps b { letter-spacing: 0; }
.apps svg { margin-bottom: 3px; }
.tray { color: #7e8375; padding-left: 41px; grid-template-columns: 76px 64px 48px 88px 78px 71px 85px 76px 69px 71px 83px 83px 79px 65px 65px 159px 120px; letter-spacing: -.4px; }
.tray span:last-child { letter-spacing: -.5px; }
.stack { position: relative; }
.count { position: absolute; left: -2px; top: 15px; width: 28px; height: 22px; border-radius: 11px; background: #f08a62; color: #fff; font: bold 17px/22px Inter, sans-serif; text-align: center; letter-spacing: 0; }
.dot { position: absolute; left: 14px; top: 18px; width: 19px; height: 19px; border-radius: 50%; background: #f8755a; }
.input { width: 44px; height: 32px; border-radius: 6px; background: #81867a; color: #3c4436; font: 600 22px/32px Inter, sans-serif; text-align: center; }

/* window frame */
.window { margin-top: 2px; height: 2158px; border: 2px solid #666; border-radius: 20px; background: #434343; overflow: hidden; }
.titlebar { height: 56px; border-bottom: 2px solid #060606; background: #292927; display: grid; grid-template-columns: 1535px 36px 213px 37px 90px; align-items: center; padding: 0 0 2px 14px; color: #565655; font-size: 26px; }
.titlebar b { color: #868684; font-weight: 600; letter-spacing: .2px; }
.lights { display: flex; gap: 16px; }
.lights i { width: 24px; height: 24px; border-radius: 50%; background: #4e4e4d; }
.lights .edited { border: 8px solid #4e4e4d; background: #2e2e2d; }

.tabs { height: 40px; padding-left: 4px; display: grid; grid-template-columns: 140px 20px 125px 132px 117px 106px 210px 129px 146px 164px 183px 154px 159px 158px 177px 125px 1167px 40px; color: #8c8c8c; line-height: 41px; }
.tabs .on { background: #323232; color: #e8e8e8; padding-left: 25px; border-radius: 0 14px 0 0; }
.tabs span:nth-child(2) { grid-column: 3; }
.tabs .gear { align-self: center; }

.toolbar { margin: 0 4px; height: 54px; background: #323232; padding-left: 3px; display: flex; }
.tool { position: relative; width: 56px; }
.tool svg { width: 100%; filter: drop-shadow(0 0 1px #858585); }
.tool .ln { filter: none; fill: none; stroke: #e0e0e0; stroke-width: 2.500; }
.tool.more::after { content: ""; position: absolute; right: 0; bottom: 0; border-style: solid; border-width: 0 0 9px 10px; border-color: transparent transparent #b5b5b5 transparent; }
.ol { stroke: #0c0c0c; stroke-width: 2.500; stroke-linejoin: round; }
.ol2 { stroke: #0c0c0c; stroke-width: 1.500; stroke-linejoin: round; }
.pin { fill: #fff; stroke: #000; stroke-width: 2.500; }

/* main columns */
.main { margin-top: 6px; padding: 0 4px; height: 1906px; display: grid; grid-template-columns: 252px 2306px 874px; gap: 6px; }
.left, .right { display: flex; flex-direction: column; gap: 6px; min-height: 0; }
.palette { height: 952px; background: #323232; padding: 26px 18px 0; }
.command { height: 38px; margin-bottom: 26px; border: 1px solid #484848; border-bottom: 2px solid #5c5c5c; background: #3b3b3b; color: #747474; font-size: 26px; line-height: 36px; padding-left: 5px; letter-spacing: .1px; }
.grid { margin-left: -10px; display: grid; grid-template-columns: repeat(4, 56px); grid-auto-rows: 56px; }

.filters { flex: 1; background: #323232; border-radius: 14px 14px 0 0; }
.filters h2, .layers h2, .props h2 { font-size: 26px; color: #959595; line-height: 38px; height: 38px; padding-left: 1px; }
.filters h2 { display: flex; justify-content: space-between; align-items: center; padding-right: 8px; letter-spacing: -.15px; }
.ftabs { height: 42px; background: #434343; display: flex; }
.ftabs i { width: 72px; height: 42px; display: grid; place-items: center; }
.ftabs .on { background: #323232; border-radius: 12px 12px 0 0; }
.filters ul { list-style: none; padding: 7px 0 0 4px; }
.filters li { height: 30px; display: flex; align-items: center; gap: 8px; color: #6c6c6c; }
.cb { width: 24px; height: 24px; border-radius: 5px; background: #484848; color: #828282; }
.filters .live { color: #e2e2e2; }
.live .cb { background: linear-gradient(#515151, #6b6b6b); color: #f2f2f2; }
.filters .last { margin-top: 34px; }

.viewport { height: 1854px; background: #e1e1e1; position: relative; }
.scene { position: absolute; left: 0; top: 0; }
.dir { fill: #2408e0; font-size: 22px; text-anchor: middle; font-family: "Liberation Sans", sans-serif; }
.vlabel { position: absolute; left: 2px; top: 2px; height: 38px; width: 192px; display: grid; grid-template-columns: 159px 31px; gap: 2px; background: #fff; }
.vlabel b { background: #929292; color: #fff; font-size: 24px; line-height: 39px; padding-left: 9px; letter-spacing: 0; }
.vlabel i { background: #929292; display: grid; place-items: center; }
.views { height: 52px; background: #414141; padding-left: 20px; display: grid; align-items: center; grid-template-columns: 64px 59px 39px 183px 38px 86px 39px 105px 40px 103px 40px 120px; color: #999; font-size: 26px; line-height: 48px; letter-spacing: -.3px; }
.views i { width: 2px; height: 28px; background: #808080; }
.views .on { color: #4a8cf6; }

/* properties panel */
.props { height: 802px; background: #323232; border-radius: 14px 14px 0 0; display: grid; grid-template-columns: 834px 40px; grid-template-rows: 38px 764px; overflow: hidden; }
.props h2 { letter-spacing: -.1px; }
.body { grid-row: 2; border-top: 2px solid #434343; display: flex; flex-direction: column; }
.modes { padding: 4px 0 0 322px; display: flex; gap: 12px; align-items: center; height: 54px; margin-bottom: 14px; }
.scroll { flex: 1; display: grid; grid-template-columns: 796px 30px; overflow: hidden; height: 694px; }
.form { padding: 0 16px; display: flex; flex-direction: column; }
.form h3 { padding-left: 4px; font-size: 22px; line-height: 60px; margin-bottom: 4px; }
.form hr { border: 0; height: 2px; margin: 30px 0 2px; width: 764px; background: #4a4a4a; flex: none; }
.row { display: grid; grid-template-columns: 385px 341px 22px; column-gap: 8px; height: 54px; flex: none; }
.row label { text-align: right; line-height: 30px; letter-spacing: .05px; }
.field { margin-left: 15px; height: 32px; background: #3b3b3b; border: 1px solid #464646; border-bottom: 2px solid #626262; padding-left: 5px; line-height: 31px; }
.wide { width: 354px; }
.off .field { color: #6b6b6b; background: #353535; border-bottom-color: #4b4b4b; }
.off .st { opacity: .45; }
.st { width: 22px; height: 32px; margin-top: -1px; }
.row.sel { height: 48px; margin-top: -4px; margin-bottom: 4px; }
.sel label { line-height: 32px; }
.select { margin-left: 13px; width: 358px; height: 32px; border-radius: 7px; background: linear-gradient(#6d6d6d, #626262); padding: 0 10px 0 12px; line-height: 33px; display: flex; justify-content: space-between; align-items: center; }
.row.lock { height: 30px; margin-top: -2px; }
.box { margin-left: 13px; width: 24px; height: 24px; border-radius: 5px; background: linear-gradient(#515151, #676767); }
.row.lock label { line-height: 25px; }
.track { background: #3b3b3b; border-left: 1px solid #4a4a4a; padding: 6px 0 0 7px; }
.track i { display: block; width: 16px; height: 331px; border-radius: 8px; background: #757575; }
.rail { grid-column: 2; grid-row: 1 / 3; display: flex; flex-direction: column; align-items: center; }
.rail .g { margin: 8px 0 31px; }
.rail .w { margin-right: 2px; }
.side { margin-top: 22px; width: 42px; flex: 1; background: #434343; border-left: 2px solid #3a3a3a; border-radius: 12px 0 0 0; display: grid; grid-template-rows: 70px 74px 71px 72px 74px 68px; padding: 1px 3px 0 0; justify-items: center; align-items: center; align-content: start; }

/* layers panel */
.layers { height: 1098px; background: #323232; border-radius: 14px 14px 0 0; padding: 0 16px; }
.layers h2 { margin: 0 -16px; padding-right: 8px; display: flex; justify-content: space-between; align-items: center; background: linear-gradient(#434343, #434343) 0 100% / 840px 2px no-repeat; height: 40px; }
.ltools { height: 72px; padding: 8px 0 0 7px; display: flex; gap: 14px; align-items: center; }
.ltools svg { width: 30px; height: 30px; }
.search { margin: 0 2px 12px; height: 40px; border: 1px solid #4c4c4c; border-bottom: 2px solid #5c5c5c; border-radius: 10px; background: #3b3b3b; color: #6f6f6f; font-size: 26px; line-height: 40px; padding-left: 13px; display: flex; align-items: center; gap: 14px; letter-spacing: -.3px; }
.table { height: 888px; background: #1e1e1e; overflow: hidden; }
.thead { height: 57px; margin-bottom: 9px; border-bottom: 2px solid #343434; display: grid; grid-template-columns: 618px 12px 91px 40px 2px; align-items: center; padding-left: 54px; padding-top: 2px; color: #f0f0f0; font-weight: 500; }
.thead i { width: 2px; height: 32px; background: #3c3c3c; }
.lrow { height: 38px; display: grid; grid-template-columns: 54px 733px 39px 16px; align-items: center; background: linear-gradient(#333, #333) 50px 100% / 800px 2px no-repeat; }
.lrow span { grid-column: 2; line-height: 36px; }
.bold { font-weight: 700; }
.lrow.bold { grid-template-columns: 54px 652px 133px; }
.bb { width: 18px; height: 24px; }
.lk { width: 16px; height: 24px; }
.lrow.plain { background: none; }
.lrow.picked { background: #464646; }
.hbar { height: 29px; border-top: 2px solid #373737; background: #2b2b2b; padding: 6px 6px 0; }
.hbar i { display: block; width: 421px; height: 16px; border-radius: 8px; background: #6b6b6b; }

/* status area */
.foot { margin: 6px 4px 0; height: 82px; background: #323232; border-radius: 12px 0 0 0; color: #bdbdbd; }
.msg { height: 32px; padding-left: 49px; display: flex; justify-content: space-between; line-height: 37px; font-size: 24px; letter-spacing: -.85px; }
.vbar { width: 30px; height: 32px; background: #3d3d3d; padding-left: 7px; }
.vbar i { display: block; width: 16px; height: 26px; border-radius: 0 0 8px 8px; background: #757575; }
.status { height: 50px; padding: 2px 0 0 10px; display: grid; align-items: center; grid-template-columns: 38px 67px 130px 144px 184px 151px 144px 45px 192px 145px 82px 108px 129px 145px 246px 40px 269px 201px 99px 841px 24px; }
.status b { height: 38px; line-height: 38px; background: #1e1e1e; color: #f0f0f0; font-weight: 700; border-radius: 5px; text-align: center; width: 102px; }
.status b:nth-of-type(3) { width: 226px; letter-spacing: .2px; }
.sw { width: 32px; height: 32px; border: 3px solid #e6e6e6; background: #000; }
```
